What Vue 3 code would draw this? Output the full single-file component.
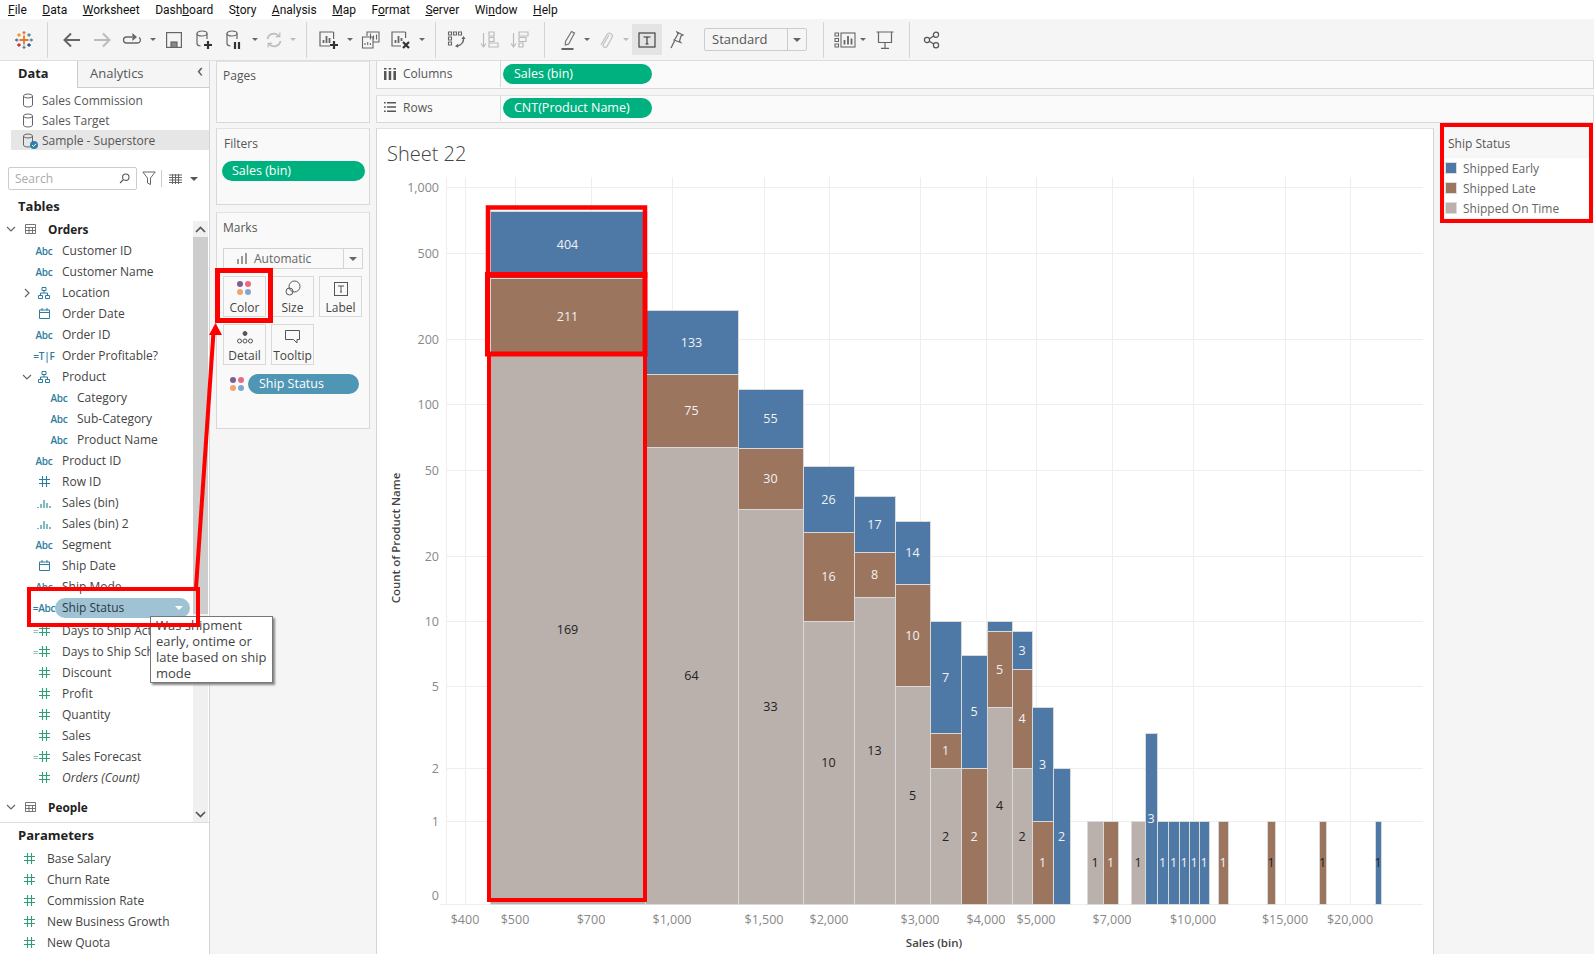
<script setup>
const BLUE = "#4e79a7";
const BROWN = "#9c755f";
const GREY = "#bab0ac";
const COLORS = { b: BLUE, r: BROWN, g: GREY };

const menus = [
  ["", "F", "ile"],
  ["", "D", "ata"],
  ["", "W", "orksheet"],
  ["Dash", "b", "oard"],
  ["S", "t", "ory"],
  ["", "A", "nalysis"],
  ["", "M", "ap"],
  ["F", "o", "rmat"],
  ["", "S", "erver"],
  ["Wi", "n", "dow"],
  ["", "H", "elp"],
];

const sources = [
  { name: "Sales Commission" },
  { name: "Sales Target" },
  { name: "Sample - Superstore", active: true },
];

const fields = [
  { name: "Customer ID", icon: "abc" },
  { name: "Customer Name", icon: "abc" },
  { name: "Location", icon: "hier", chevron: "right" },
  { name: "Order Date", icon: "cal" },
  { name: "Order ID", icon: "abc" },
  { name: "Order Profitable?", icon: "tf" },
  { name: "Product", icon: "hier", chevron: "down" },
  { name: "Category", icon: "abc", nested: true },
  { name: "Sub-Category", icon: "abc", nested: true },
  { name: "Product Name", icon: "abc", nested: true },
  { name: "Product ID", icon: "abc" },
  { name: "Row ID", icon: "hashDim" },
  { name: "Sales (bin)", icon: "bin" },
  { name: "Sales (bin) 2", icon: "bin" },
  { name: "Segment", icon: "abc" },
  { name: "Ship Date", icon: "cal" },
  { name: "Ship Mode", icon: "abc" },
  { name: "Ship Status", icon: "calcAbc", hover: true },
  { name: "Days to Ship Actual", icon: "calcHash" },
  { name: "Days to Ship Scheduled", icon: "calcHash" },
  { name: "Discount", icon: "hash" },
  { name: "Profit", icon: "hash" },
  { name: "Quantity", icon: "hash" },
  { name: "Sales", icon: "hash" },
  { name: "Sales Forecast", icon: "calcHash" },
  { name: "Orders (Count)", icon: "hash", italic: true },
];

const params = ["Base Salary", "Churn Rate", "Commission Rate", "New Business Growth", "New Quota"];

const legend = [
  { name: "Shipped Early", color: BLUE },
  { name: "Shipped Late", color: BROWN },
  { name: "Shipped On Time", color: GREY },
];

const yTicks = [
  ["1,000", 187], ["500", 253], ["200", 339], ["100", 404], ["50", 470], ["20", 556],
  ["10", 621], ["5", 686], ["2", 768], ["1", 821],
];

const xTicks = [
  ["$400", 465], ["$500", 515], ["$700", 591], ["$1,000", 672], ["$1,500", 764], ["$2,000", 829],
  ["$3,000", 920], ["$4,000", 986], ["$5,000", 1036], ["$7,000", 1112], ["$10,000", 1193],
  ["$15,000", 1285], ["$20,000", 1350],
];

// x0, x1, then [top, bottom, colour, label, dark label on a narrow bar]
const bars = [
  [490, 645, [[211, 278, "b", "404"], [278, 354, "r", "211"], [354, 904, "g", "169"]]],
  [645, 738, [[310, 374, "b", "133"], [374, 447, "r", "75"], [447, 904, "g", "64"]]],
  [738, 803, [[389, 448, "b", "55"], [448, 509, "r", "30"], [509, 904, "g", "33"]]],
  [803, 854, [[466, 532, "b", "26"], [532, 621, "r", "16"], [621, 904, "g", "10"]]],
  [854, 895, [[496, 552, "b", "17"], [552, 597, "r", "8"], [597, 904, "g", "13"]]],
  [895, 930, [[521, 584, "b", "14"], [584, 686, "r", "10"], [686, 904, "g", "5"]]],
  [930, 961, [[621, 733, "b", "7"], [733, 768, "r", "1"], [768, 904, "g", "2"]]],
  [961, 987, [[655, 768, "b", "5"], [768, 904, "r", "2"]]],
  [987, 1012, [[621, 631, "b", ""], [631, 707, "r", "5"], [707, 904, "g", "4"]]],
  [1012, 1032, [[631, 669, "b", "3"], [669, 768, "r", "4"], [768, 904, "g", "2"]]],
  [1032, 1053, [[707, 821, "b", "3"], [821, 904, "r", "1"]]],
  [1053, 1070, [[768, 904, "b", "2"]]],
  [1087, 1103, [[821, 904, "g", "1"]]],
  [1103, 1118, [[821, 904, "r", "1"]]],
  [1131, 1145, [[821, 904, "g", "1"]]],
  [1145, 1157, [[733, 904, "b", "3"]]],
  [1157, 1168, [[821, 904, "b", "1"]]],
  [1168, 1179, [[821, 904, "b", "1"]]],
  [1179, 1189, [[821, 904, "b", "1"]]],
  [1189, 1199, [[821, 904, "b", "1"]]],
  [1199, 1209, [[821, 904, "b", "1"]]],
  [1218, 1228, [[821, 904, "r", "1"]]],
  [1267, 1275, [[821, 904, "r", "1", true]]],
  [1319, 1326, [[821, 904, "r", "1", true]]],
  [1375, 1381, [[821, 904, "b", "1", true]]],
];

const segments = bars.flatMap(([x0, x1, segs]) =>
  segs.map(([top, bottom, color, label, dark]) => ({
    x: x0,
    y: top,
    w: x1 - x0,
    h: bottom - top,
    fill: COLORS[color],
    label,
    tx: (x0 + x1) / 2,
    ty: (top + bottom) / 2,
    dark: dark || color === "g",
  })),
);
</script>

<template>
  <div class="app">
    <nav class="menu">
      <span v-for="m in menus" :key="m[1] + m[2]" class="menu-item">{{ m[0] }}<u>{{ m[1] }}</u>{{ m[2] }}</span>
    </nav>

    <div class="toolbar">
      <div class="tb-logo">
        <svg width="20" height="20" viewBox="0 0 20 20" fill="none" stroke-width="1.3">
          <path d="M10 5.5v9M5.5 10h9" stroke="#e8762d" stroke-width="1.8" />
          <path d="M10 1v3.4M8.4 2.7h3.2" stroke="#e8762d" />
          <path d="M10 15.6V19M8.4 17.3h3.2" stroke="#5b879b" />
          <path d="M1 10h3.4M2.7 8.4v3.2" stroke="#5b6f9b" />
          <path d="M15.6 10H19M17.3 8.4v3.2" stroke="#5b879b" />
          <path d="M5 3.2v3.6M3.2 5h3.6" stroke="#eb9129" />
          <path d="M15 3.2v3.6M13.2 5h3.6" stroke="#59879b" />
          <path d="M5 13.2v3.6M3.2 15h3.6" stroke="#c72035" />
          <path d="M15 13.2v3.6M13.2 15h3.6" stroke="#1f447e" />
        </svg>
      </div>
      <i class="tb-sep" />
      <div class="tb-btn first">
        <svg width="20" height="20" viewBox="0 0 20 20" fill="none" stroke="#666" stroke-width="2"><path d="M18 10H3M9 3.5 2.5 10 9 16.5" /></svg>
      </div>
      <div class="tb-btn">
        <svg width="20" height="20" viewBox="0 0 20 20" fill="none" stroke="#bbb" stroke-width="2"><path d="M2 10h15M11 3.5l6.5 6.5-6.5 6.5" /></svg>
      </div>
      <div class="tb-btn">
        <svg width="20" height="20" viewBox="0 0 20 20" fill="none" stroke="#666" stroke-width="1.3"><path d="M10 7H4.5a3 3 0 0 0 0 6h11a3 3 0 0 0 1.6-5.5" /><path d="M11 4.4 14 7l-3 2.6z" fill="#666" /></svg>
      </div>
      <i class="tb-caret" />
      <div class="tb-btn">
        <svg width="18" height="18" viewBox="0 0 18 18" fill="none" stroke="#666" stroke-width="1.2"><rect x="1.6" y="1.6" width="14.8" height="14.8" /><rect x="6" y="11" width="6" height="5.4" fill="#888" stroke="#666" /></svg>
      </div>
      <div class="tb-btn">
        <svg width="20" height="22" viewBox="0 0 20 22" fill="none" stroke="#666" stroke-width="1.2"><ellipse cx="8" cy="4.5" rx="5" ry="2.5" /><path d="M3 4.5v10c0 1.4 1.3 2.3 3.5 2.5M13 4.5V10" /><path d="M14 12v8M10 16h8" stroke="#333" stroke-width="2.2" /></svg>
      </div>
      <div class="tb-btn">
        <svg width="20" height="22" viewBox="0 0 20 22" fill="none" stroke="#666" stroke-width="1.2"><ellipse cx="8" cy="4.5" rx="5" ry="2.5" /><path d="M3 4.5v10c0 1.4 1.3 2.3 3.5 2.5M13 4.5V10" /><path d="M11 13v7M15 13v7" stroke="#333" stroke-width="2.2" /></svg>
      </div>
      <i class="tb-caret" />
      <div class="tb-btn narrow">
        <svg width="18" height="18" viewBox="0 0 18 18" fill="none" stroke="#bbb" stroke-width="1.6"><path d="M2.5 8a6.6 6.6 0 0 1 11.5-3M15.5 10a6.6 6.6 0 0 1-11.5 3" /><path d="M14.8 1.6v4h-4M3.2 16.4v-4h4" stroke-width="1.2" /></svg>
      </div>
      <i class="tb-caret off" />
      <i class="tb-sep s2" />
      <div class="tb-btn">
        <svg width="22" height="22" viewBox="0 0 22 22" fill="none" stroke="#666" stroke-width="1.2"><path d="M15.6 3H2v14h10" /><path d="M15.6 3v7" /><path d="M5.5 14v-3M8.5 14V7M11.5 14v-5" stroke-width="1.8" /><path d="M16 12v8M12 16h8" stroke="#333" stroke-width="2.2" /></svg>
      </div>
      <i class="tb-caret" />
      <div class="tb-btn">
        <svg width="20" height="20" viewBox="0 0 20 20" fill="none" stroke="#666" stroke-width="1.1"><path d="M6 6V2h12v10h-6" /><path d="M1.5 7H12v11H1.5z" /><path d="M9.5 9.5v-6M12.5 9.5v-4M15.5 9.5v-5M4 15v-2M6.7 15v-3M9.4 15v-2" /></svg>
      </div>
      <div class="tb-btn">
        <svg width="22" height="22" viewBox="0 0 22 22" fill="none" stroke="#666" stroke-width="1.2"><path d="M15.6 3H2v14h9" /><path d="M15.6 3v6" /><path d="M5.5 14v-3M8.5 14V7M11.5 12V9" stroke-width="1.8" /><path d="m13 13 6 6M19 13l-6 6" stroke="#333" stroke-width="2.2" /></svg>
      </div>
      <i class="tb-caret" />
      <i class="tb-sep s3" />
      <div class="tb-btn">
        <svg width="20" height="20" viewBox="0 0 20 20" fill="none" stroke="#666" stroke-width="1.1"><path d="M1.5 2h3v3h-3zM6.5 2h3v3h-3zM11.5 2h3v3h-3zM1.5 7h3v3h-3zM1.5 12h3v3h-3z" /><path d="M16.5 7.5c.4 4-2 7.4-6 8.5" stroke-width="1.3" /><path d="m14.4 9 2.1-3 2 3zM11 13.8 8 16.2l3.2 1.6z" fill="#666" stroke="none" /></svg>
      </div>
      <div class="tb-btn spaced-3">
        <svg width="20" height="20" viewBox="0 0 20 20" fill="none" stroke="#bbb" stroke-width="1.2"><path d="M3.5 3v13M1 13.5 3.5 17 6 13.5" /><path d="M9 2h5v4H9zM9 7.5h5v4H9zM9 13h9v4H9z" /></svg>
      </div>
      <div class="tb-btn">
        <svg width="20" height="20" viewBox="0 0 20 20" fill="none" stroke="#bbb" stroke-width="1.2"><path d="M3.5 3v13M1 13.5 3.5 17 6 13.5" /><path d="M9 2h9v4H9zM9 7.5h7v4H9zM9 13h4v4H9z" /></svg>
      </div>
      <i class="tb-sep s4" />
      <div class="tb-btn">
        <svg width="20" height="22" viewBox="0 0 20 22" fill="none" stroke="#777" stroke-width="1.2"><path d="M12.5 2.5l3 1.6-5.8 11-3.4.8.2-3.4z" /><path d="M2.5 20h12" stroke="#555" stroke-width="1.8" /></svg>
      </div>
      <i class="tb-caret tight" />
      <div class="tb-btn">
        <svg width="18" height="22" viewBox="0 0 18 22" fill="none" stroke="#c4c4c4" stroke-width="1.3"><path d="M13 6l-5.6 9.5c-1.4 2.3 2.2 4.2 3.6 1.9L16 8.5c1.8-3.2-3-6-5-2.8L5 15.8" /></svg>
      </div>
      <i class="tb-caret off" />
      <div class="tb-btn tb-active">
        <svg width="18" height="18" viewBox="0 0 18 18" fill="none" stroke="#333" stroke-width="1.1"><rect x="1" y="2" width="16" height="14" /><path d="M5.5 6h7M9 6v7M7.5 13h3" /></svg>
      </div>
      <div class="tb-btn">
        <svg width="18" height="20" viewBox="0 0 18 20" fill="none" stroke="#666" stroke-width="1.2"><path d="M9 2l6 3-2 1-1.500 5 1.200 1.500-6.700-2.500 1.200-1.200L10 4z" /><path d="M6.500 11 3 18" /></svg>
      </div>
      <div class="fit-select">
        <span class="fit-label">Standard</span>
        <span class="fit-arrow"><i class="tb-caret-glyph" /></span>
      </div>
      <i class="tb-sep s5" />
      <div class="tb-btn">
        <svg width="22" height="18" viewBox="0 0 22 18" fill="none" stroke="#666" stroke-width="1.1"><path d="M1 2h3.500v3H1zM1 7.500h3.500v3H1zM1 13h3.500v3H1z" /><rect x="7" y="2" width="14" height="14" /><path d="M10.500 13.500V9M14 13.500V5M17.500 13.500V7.500" stroke-width="1.8" /></svg>
      </div>
      <i class="tb-caret tight" />
      <div class="tb-btn spaced-4">
        <svg width="20" height="20" viewBox="0 0 20 20" fill="none" stroke="#666" stroke-width="1.2"><path d="M1.500 2h17M3.500 2.500v10h13v-10M10 13v5M6 18.300h8" /></svg>
      </div>
      <i class="tb-sep s6" />
      <div class="tb-btn">
        <svg width="18" height="18" viewBox="0 0 18 18" fill="none" stroke="#555" stroke-width="1.2"><circle cx="13" cy="3.800" r="2.600" /><circle cx="13" cy="14.200" r="2.600" /><circle cx="4" cy="9" r="2.600" /><path d="M6.300 7.700l4.500-2.600M6.300 10.300l4.500 2.600" /></svg>
      </div>
    </div>

    <div class="body">
      <aside class="left">
        <div class="tabs">
          <div class="tab active">Data</div>
          <div class="tab">Analytics<span class="collapse">‹</span></div>
        </div>

        <div class="sources">
          <div v-for="s in sources" :key="s.name" class="source" :class="{ active: s.active }">
            <svg width="12" height="15" viewBox="0 0 12 15" fill="none" stroke="#666" stroke-width="1"><ellipse cx="6" cy="3" rx="4.500" ry="2" /><path d="M1.500 3v9c0 1.100 2 2 4.500 2s4.500-.9 4.500-2V3" /></svg>
            <svg v-if="s.active" class="source-badge" width="8" height="8" viewBox="0 0 8 8"><circle cx="4" cy="4" r="4" fill="#2a7fab" /><path d="M2 4l1.500 1.500L6 2.800" stroke="#fff" fill="none" /></svg>
            <span>{{ s.name }}</span>
          </div>
        </div>

        <div class="search-row">
          <div class="search">
            <span>Search</span>
            <svg width="11" height="11" viewBox="0 0 11 11" fill="none" stroke="#555" stroke-width="1.100"><circle cx="6.800" cy="4.200" r="3.200" /><path d="M4.500 6.500 1 10" /></svg>
          </div>
          <svg class="funnel" width="14" height="15" viewBox="0 0 14 15" fill="none" stroke="#666" stroke-width="1"><path d="M.8 1h12.400L8.500 7v6.500L5.500 12V7z" /></svg>
          <i class="search-sep" />
          <svg width="13" height="10" viewBox="0 0 13 10" fill="none" stroke="#666" stroke-width="1"><path d="M0 1h13M0 3.500h13M0 6h13M0 8.500h13M3.500 0v10M6.500 0v10M9.500 0v10" /></svg>
          <i class="tb-caret-glyph search-caret" />
        </div>

        <div class="section-title">Tables</div>

        <div class="list-wrap">
          <div class="list">
            <div class="field table-row">
              <svg class="chev" width="10" height="6" viewBox="0 0 10 6" fill="none" stroke="#666" stroke-width="1.200"><path d="M1 1l4 4 4-4" /></svg>
              <span class="f-icon"><svg width="11" height="10" viewBox="0 0 11 10" fill="none" stroke="#666" stroke-width=".9"><path d="M.5.500h10v9H.500zM.5 3.500h10M.5 6.500h10M4 3.500v6M7.500 3.500v6" /></svg></span>
              <b>Orders</b>
            </div>
            <div v-for="f in fields" :key="f.name" class="field" :class="{ nested: f.nested, hover: f.hover }">
              <span class="chev-slot">
                <svg v-if="f.chevron === 'right'" width="6" height="10" viewBox="0 0 6 10" fill="none" stroke="#666" stroke-width="1.200"><path d="M1 1l4 4-4 4" /></svg>
                <svg v-if="f.chevron === 'down'" width="10" height="6" viewBox="0 0 10 6" fill="none" stroke="#666" stroke-width="1.200"><path d="M1 1l4 4 4-4" /></svg>
              </span>
              <span class="f-icon">
                <span v-if="f.icon === 'abc'" class="abc">Abc</span>
                <span v-else-if="f.icon === 'calcAbc'" class="abc">=Abc</span>
                <span v-else-if="f.icon === 'tf'" class="abc">=T|F</span>
                <svg v-else-if="f.icon === 'hier'" width="12" height="12" viewBox="0 0 12 12" fill="none" stroke="#2e7d9e" stroke-width="1"><path d="M4 .5h4v3H4zM.5 8.500h4v3h-4zM7.500 8.500h4v3h-4zM6 3.500V6M2.500 8.500V6h7v2.500" /></svg>
                <svg v-else-if="f.icon === 'cal'" width="11" height="11" viewBox="0 0 11 11" fill="none" stroke="#2e7d9e" stroke-width="1"><path d="M.5 2h10v8.500H.500zM.5 4.500h10M3 0v2.500M8 0v2.500" /></svg>
                <svg v-else-if="f.icon === 'bin'" width="15" height="10" viewBox="0 0 15 10"><path d="M1 9v1M4 6v4M7 2v8M10 5v5M13 8v2" stroke="#2e8f96" stroke-width="1.200" /></svg>
                <span v-else class="hash-wrap">
                  <span v-if="f.icon === 'calcHash'" class="eq">=</span>
                  <svg width="11" height="11" viewBox="0 0 11 11" fill="none" :stroke="f.icon === 'hashDim' ? '#2e7d9e' : '#2f9d7a'" stroke-width="1.100"><path d="M3.500 0v11M7.500 0v11M0 3.500h11M0 7.500h11" /></svg>
                </span>
              </span>
              <span class="f-name" :class="{ italic: f.italic }">{{ f.name }}</span>
              <i v-if="f.hover" class="hover-caret" />
            </div>
            <div class="field table-row people">
              <svg class="chev" width="10" height="6" viewBox="0 0 10 6" fill="none" stroke="#666" stroke-width="1.200"><path d="M1 1l4 4 4-4" /></svg>
              <span class="f-icon"><svg width="11" height="10" viewBox="0 0 11 10" fill="none" stroke="#666" stroke-width=".9"><path d="M.5.500h10v9H.500zM.5 3.500h10M.5 6.500h10M4 3.500v6M7.500 3.500v6" /></svg></span>
              <b>People</b>
            </div>
          </div>
          <div class="scrollbar">
            <svg width="11" height="7" viewBox="0 0 11 7" fill="none" stroke="#555" stroke-width="1.700"><path d="M1 6l4.500-4.500L10 6" /></svg>
            <div class="thumb" />
            <svg class="down" width="11" height="7" viewBox="0 0 11 7" fill="none" stroke="#555" stroke-width="1.700"><path d="M1 1l4.500 4.500L10 1" /></svg>
          </div>
        </div>

        <div class="params">
          <div class="section-title param-title">Parameters</div>
          <div v-for="p in params" :key="p" class="field param">
            <span class="chev-slot" />
            <span class="f-icon">
              <svg width="11" height="11" viewBox="0 0 11 11" fill="none" stroke="#2f9d7a" stroke-width="1.100"><path d="M3.500 0v11M7.500 0v11M0 3.500h11M0 7.500h11" /></svg>
            </span>
            <span class="f-name">{{ p }}</span>
          </div>
        </div>
      </aside>

      <section class="cards">
        <div class="card pages"><div class="card-title">Pages</div></div>
        <div class="card filters">
          <div class="card-title">Filters</div>
          <div class="pill green filter-pill">Sales (bin)</div>
        </div>
        <div class="card marks">
          <div class="card-title">Marks</div>
          <div class="mark-select">
            <svg width="12" height="11" viewBox="0 0 12 11" fill="#999"><path d="M1 6h2v5H1zM5 3h2v8H5zM9 0h2v11H9z" /></svg>
            <span class="mark-select-label">Automatic</span>
            <span class="mark-select-arrow"><i class="tb-caret-glyph" /></span>
          </div>
          <div class="mark-grid">
            <div class="mark-btn">
              <span class="dots"><i class="d1" /><i class="d2" /><i class="d3" /><i class="d4" /></span>
              <span>Color</span>
            </div>
            <div class="mark-btn">
              <svg width="16" height="16" viewBox="0 0 16 16" fill="none" stroke="#555" stroke-width="1"><circle cx="9.500" cy="6.500" r="5.500" /><circle cx="4.500" cy="11.500" r="3.500" /></svg>
              <span>Size</span>
            </div>
            <div class="mark-btn">
              <svg width="14" height="14" viewBox="0 0 14 14" fill="none" stroke="#555" stroke-width="1"><rect x=".5" y=".5" width="13" height="13" /><path d="M4 4h6M7 4v6M6 10h2" /></svg>
              <span>Label</span>
            </div>
            <div class="mark-btn">
              <svg width="16" height="13" viewBox="0 0 16 13" fill="none" stroke="#555" stroke-width="1"><circle cx="8" cy="2.500" r="2" fill="#555" /><circle cx="2.500" cy="10" r="2" /><circle cx="8" cy="10" r="2" /><circle cx="13.500" cy="10" r="2" /></svg>
              <span>Detail</span>
            </div>
            <div class="mark-btn">
              <svg width="15" height="14" viewBox="0 0 15 14" fill="none" stroke="#555" stroke-width="1"><path d="M.5.500h14v9H12V13L8.500 9.500H.5z" /></svg>
              <span>Tooltip</span>
            </div>
          </div>
          <div class="mark-field">
            <span class="dots"><i class="d1" /><i class="d2" /><i class="d3" /><i class="d4" /></span>
            <div class="pill teal">Ship Status</div>
          </div>
        </div>
      </section>

      <section class="work">
        <div class="shelf columns">
          <div class="shelf-label">
            <svg width="12" height="12" viewBox="0 0 12 12" fill="#555"><path d="M0 3h2.500v9H0zM4.700 3h2.500v9H4.700zM9.400 3H12v9H9.400zM0 0h2.500v1.500H0zM4.700 0h2.500v1.500H4.700zM9.400 0H12v1.500H9.400z" /></svg>
            <span>Columns</span>
          </div>
          <div class="pill green shelf-pill">Sales (bin)</div>
        </div>
        <div class="shelf rows">
          <div class="shelf-label">
            <svg width="12" height="12" viewBox="0 0 12 12" fill="#555"><path d="M3 1h9v1.500H3zM3 5.300h9v1.500H3zM3 9.600h9v1.500H3zM0 1h1.700v1.500H0zM0 5.300h1.700v1.500H0zM0 9.600h1.700v1.500H0z" /></svg>
            <span>Rows</span>
          </div>
          <div class="pill green shelf-pill">CNT(Product Name)</div>
        </div>

        <div class="view">
          <div class="sheet">
            <h1 class="sheet-title">Sheet 22</h1>
            <svg class="chart" width="1056" height="782" viewBox="377 172 1056 782">
              <line v-for="t in yTicks" :key="t[0]" x1="446" x2="1423" :y1="t[1]" :y2="t[1]" class="grid" />
              <line x1="446" x2="446" y1="177" y2="904" class="grid" />
              <line v-for="t in xTicks" :key="t[0]" :x1="t[1]" :x2="t[1]" y1="177" y2="904" class="grid" />
              <line x1="440" x2="1423" y1="904" y2="904" class="grid" />

              <g v-for="(s, i) in segments" :key="i">
                <rect :x="s.x + 0.5" :y="s.y + 0.5" :width="s.w" :height="s.h" :fill="s.fill" stroke="#d9d9d9" stroke-width="1" />
              </g>
              <text v-for="(s, i) in segments" :key="'l' + i" :x="s.tx" :y="s.ty + 4.500" class="seg-label" :class="{ dark: s.dark }">{{ s.label }}</text>

              <text v-for="t in yTicks" :key="'y' + t[0]" x="439" :y="t[1] + 5" class="tick end">{{ t[0] }}</text>
              <text x="439" y="900" class="tick end">0</text>
              <text v-for="t in xTicks" :key="'x' + t[0]" :x="t[1]" y="924" class="tick mid">{{ t[0] }}</text>

              <text x="0" y="0" transform="translate(400 538) rotate(-90)" class="axis-title">Count of Product Name</text>
              <text x="934" y="947" class="axis-title">Sales (bin)</text>
            </svg>
          </div>
          <aside class="legend">
            <div class="legend-title">Ship Status</div>
            <div v-for="l in legend" :key="l.name" class="legend-item">
              <i class="swatch" :style="{ background: l.color }" />
              <span>{{ l.name }}</span>
            </div>
          </aside>
        </div>
      </section>
    </div>

    <div class="tooltip">Was shipment early, ontime or late based on ship mode</div>

    <svg class="annotations" width="1594" height="954" viewBox="0 0 1594 954" fill="none" stroke="#ff0000">
      <rect x="488" y="207.500" width="157" height="68" stroke-width="4.500" />
      <rect x="487.500" y="274.500" width="157.500" height="79.500" stroke-width="5" />
      <rect x="489" y="354" width="156" height="546" stroke-width="4" />
      <rect x="217.500" y="270.500" width="53" height="50" stroke-width="5" />
      <rect x="29" y="589" width="169" height="36" stroke-width="4" />
      <rect x="1442" y="125" width="149" height="96" stroke-width="4" />
      <line x1="196" y1="588" x2="213.500" y2="332" stroke-width="4" />
      <polygon points="215.500,323 209,335 222,335" fill="#ff0000" stroke="none" />
    </svg>
  </div>
</template>

<style>
html,
body {
  margin: 0;
  background: #fff;
}
</style>

<style scoped>
.app {
  position: relative;
  width: 1594px;
  height: 954px;
  overflow: hidden;
  display: flex;
  flex-direction: column;
  background: #f5f5f5;
  color: #444;
  font-family: "Open Sans", "Liberation Sans", sans-serif;
  font-size: 12px;
}

.menu {
  height: 19px;
  flex: none;
  display: flex;
  align-items: center;
  gap: 15.500px;
  padding-left: 8px;
  background: #fff;
  color: #111;
  font-family: Roboto, "Liberation Sans", sans-serif;
  font-size: 12px;
}

.toolbar {
  height: 42px;
  flex: none;
  display: flex;
  align-items: center;
  box-sizing: border-box;
  border-bottom: 1px solid #ddd;
  background: #f5f5f5;
}

.tb-logo {
  width: 47px;
  display: flex;
  justify-content: center;
}

.tb-sep {
  width: 1px;
  height: 36px;
  flex: none;
  background: #d4d4d4;
}

.tb-sep.s2 {
  margin-left: 7px;
  margin-right: 7px;
}

.tb-sep.s3 {
  margin-left: 7px;
  margin-right: 6px;
}

.tb-sep.s4 {
  margin-left: 9px;
  margin-right: 9px;
}

.tb-sep.s5 {
  margin-left: 16px;
  margin-right: 6px;
}

.tb-sep.s6 {
  margin-left: 9px;
  margin-right: 7px;
}

.tb-btn {
  width: 30px;
  height: 31px;
  flex: none;
  display: flex;
  align-items: center;
  justify-content: center;
}

.tb-btn.first {
  margin-left: 8px;
  width: 31px;
}

.tb-btn.narrow {
  width: 26px;
}

.tb-btn.spaced-3 {
  margin-left: 3px;
}

.tb-btn.spaced-4 {
  margin-left: 4px;
}

.tb-active {
  background: #e4e4e4;
}

.tb-caret {
  width: 12px;
  height: 31px;
  flex: none;
  position: relative;
}

.tb-caret.tight {
  margin-left: -3px;
  margin-right: -3px;
}

.tb-caret::after,
.tb-caret-glyph {
  content: "";
  display: block;
  width: 0;
  height: 0;
  border-left: 3px solid transparent;
  border-right: 3px solid transparent;
  border-top: 3px solid #666;
}

.tb-caret::after {
  position: absolute;
  left: 3px;
  top: 14px;
}

.tb-caret.off::after {
  border-top-color: #bbb;
}

.fit-select {
  width: 103px;
  height: 23px;
  margin-left: 12px;
  flex: none;
  display: flex;
  box-sizing: border-box;
  border: 1px solid #ccc;
  border-radius: 2px;
  font-size: 13px;
  color: #555;
}

.fit-label {
  flex: 1;
  padding-left: 7px;
  line-height: 20px;
}

.fit-arrow {
  width: 18px;
  display: flex;
  align-items: center;
  justify-content: center;
  border-left: 1px solid #ccc;
}

.fit-arrow .tb-caret-glyph,
.mark-select-arrow .tb-caret-glyph,
.search-caret {
  border-left-width: 4px;
  border-right-width: 4px;
  border-top-width: 4px;
}

.body {
  flex: 1;
  min-height: 0;
  display: flex;
}

.left {
  width: 210px;
  flex: none;
  box-sizing: border-box;
  display: flex;
  flex-direction: column;
  border-right: 1px solid #d4d4d4;
  background: #fff;
}

.tabs {
  height: 27px;
  flex: none;
  display: flex;
}

.tab {
  box-sizing: border-box;
  position: relative;
  line-height: 24px;
  font-size: 13px;
  color: #555;
}

.tab.active {
  width: 77px;
  padding-left: 18px;
  font-weight: 700;
  color: #222;
  font-size: 12.800px;
}

.tab:not(.active) {
  flex: 1;
  padding-left: 12px;
  background: #f5f5f5;
  border-left: 1px solid #ccc;
  border-bottom: 1px solid #ccc;
}

.collapse {
  position: absolute;
  right: 6px;
  top: -3px;
  font-size: 20px;
  color: #555;
}

.sources {
  padding-top: 2px;
  height: 62px;
  flex: none;
}

.source {
  height: 20px;
  display: flex;
  align-items: center;
  position: relative;
  padding-left: 22px;
  margin-left: 0;
  color: #555;
}

.source span {
  margin-left: 8px;
}

.source.active {
  margin-left: 11px;
  width: 187px;
  padding-left: 11px;
  background: #e6e6e6;
}

.source-badge {
  position: absolute;
  left: 19px;
  top: 11px;
}

.search-row {
  margin-top: 15px;
  height: 23px;
  flex: none;
  display: flex;
  align-items: center;
  padding-left: 8px;
}

.search {
  width: 129px;
  height: 23px;
  box-sizing: border-box;
  display: flex;
  align-items: center;
  justify-content: space-between;
  padding: 0 6px;
  border: 1px solid #ccc;
  border-radius: 2px;
  color: #aaa;
  font-size: 12px;
}

.funnel {
  margin-left: 5px;
}

.search-sep {
  width: 1px;
  height: 17px;
  margin: 0 7px 0 5px;
  background: #ccc;
}

.search-caret {
  margin-left: 8px;
  border-top-color: #555;
}

.section-title {
  height: 20px;
  flex: none;
  margin-top: 6px;
  padding-left: 18px;
  line-height: 20px;
  font-size: 13px;
  font-weight: 700;
  color: #222;
}

.list-wrap {
  flex: 1;
  min-height: 0;
  margin-top: 2px;
  display: flex;
  overflow: hidden;
  border-bottom: 1px solid #ddd;
  position: relative;
}

.list {
  flex: 1;
  min-width: 0;
  overflow: hidden;
}

.scrollbar {
  width: 15px;
  flex: none;
  margin: 3px 1px 0 0;
  position: relative;
  background: #f0f0f0;
  display: flex;
  flex-direction: column;
  align-items: center;
}

.scrollbar svg {
  margin-top: 5px;
  flex: none;
}

.thumb {
  margin-top: 4px;
  width: 15px;
  height: 377px;
  background: #cdcdcd;
}

.scrollbar .down {
  position: absolute;
  bottom: 4px;
  margin: 0;
}

.field {
  height: 21px;
  display: flex;
  align-items: center;
  padding-left: 19px;
  white-space: nowrap;
  color: #444;
  font-size: 12px;
}

.field.nested {
  padding-left: 34px;
}

.field.table-row {
  height: 22px;
  padding-left: 6px;
}

.field.table-row .chev {
  width: 10px;
  margin-right: 5px;
  flex: none;
}

.field.table-row b {
  margin-left: 9px;
  color: #222;
  font-size: 11.800px;
}

.field.people {
  margin-top: 8px;
  height: 21px;
}

.chev-slot {
  width: 16px;
  flex: none;
  display: flex;
  align-items: center;
  justify-content: center;
}

.f-icon {
  width: 18px;
  flex: none;
  display: flex;
  align-items: center;
  justify-content: center;
}

.f-name {
  margin-left: 9px;
}

.f-name.italic {
  font-style: italic;
}

.abc {
  font-size: 10px;
  font-weight: 600;
  letter-spacing: -0.200px;
  color: #2e7d9e;
}

.hash-wrap {
  display: flex;
  align-items: center;
  position: relative;
}

.eq {
  position: absolute;
  right: 100%;
  font-size: 10px;
  color: #2f9d7a;
}

.field.hover {
  height: 23px;
  box-sizing: border-box;
  padding-bottom: 2px;
  position: relative;
}

.field.hover::before {
  content: "";
  position: absolute;
  left: 55px;
  width: 135px;
  height: 20px;
  border-radius: 10px;
  background: #9fc3d4;
}

.field.hover .f-icon,
.field.hover .f-name {
  position: relative;
}

.field.hover .f-name {
  color: #2b3a42;
}

.hover-caret {
  position: absolute;
  left: 175px;
  top: 9px;
  border-left: 4px solid transparent;
  border-right: 4px solid transparent;
  border-top: 4px solid #fff;
}

.params {
  flex: none;
  height: 131px;
  overflow: hidden;
}

.param-title {
  margin-top: 2px;
  margin-bottom: 3px;
}

.field.param {
  padding-left: 4px;
}

.cards {
  width: 154px;
  flex: none;
  margin-left: 6px;
  display: flex;
  flex-direction: column;
}

.card {
  box-sizing: border-box;
  border: 1px solid #d8d8d8;
  border-top-color: #e2e2e2;
  background: #f9f9f9;
  padding: 0 6px;
}

.card-title {
  height: 30px;
  line-height: 30px;
  color: #555;
  font-size: 12px;
}

.pages {
  height: 62px;
}

.pages .card-title {
  line-height: 28px;
}

.filters {
  height: 77px;
  margin-top: 5px;
  padding-left: 5px;
  padding-right: 4px;
}

.filters .card-title {
  padding-left: 2px;
}

.pill {
  height: 20px;
  border-radius: 10px;
  line-height: 19px;
  color: #fff;
  font-size: 12.500px;
}

.pill.green {
  background: #00b180;
}

.pill.teal {
  flex: 1;
  background: #4f96b4;
  padding-left: 11px;
}

.filter-pill {
  margin-top: 2px;
  padding-left: 10px;
}

.marks {
  height: 217px;
  margin-top: 7px;
}

.marks .card-title {
  height: 35px;
  line-height: 30px;
}

.mark-select {
  height: 21px;
  display: flex;
  align-items: center;
  box-sizing: border-box;
  border: 1px solid #d4d4d4;
  padding-left: 12px;
  color: #666;
}

.mark-select-label {
  flex: 1;
  margin-left: 6px;
}

.mark-select-arrow {
  width: 18px;
  height: 100%;
  display: flex;
  align-items: center;
  justify-content: center;
  border-left: 1px solid #d4d4d4;
}

.mark-grid {
  margin-top: 7px;
  display: grid;
  grid-template-columns: 43px 43px 43px;
  grid-auto-rows: 41px;
  column-gap: 5px;
  row-gap: 7px;
}

.mark-btn {
  box-sizing: border-box;
  border: 1px solid #d8d8d8;
  display: flex;
  flex-direction: column;
  align-items: center;
  justify-content: flex-end;
  gap: 3px;
  color: #444;
}

.dots {
  width: 15px;
  height: 15px;
  display: grid;
  grid-template-columns: 6px 6px;
  grid-auto-rows: 6px;
  gap: 2px;
}

.dots i {
  border-radius: 50%;
}

.d1 {
  background: #7c5f91;
}

.d2 {
  background: #ea6b81;
}

.d3 {
  background: #f0a56e;
}

.d4 {
  background: #7ea7d0;
}

.mark-field {
  margin-top: 9px;
  display: flex;
  align-items: center;
  gap: 3px;
  padding-left: 7px;
  padding-right: 4px;
}

.work {
  flex: 1;
  min-width: 0;
  margin-left: 6px;
  display: flex;
  flex-direction: column;
}

.shelf {
  height: 28px;
  flex: none;
  display: flex;
  align-items: center;
  box-sizing: border-box;
  padding-bottom: 2px;
  border: 1px solid #d8d8d8;
  border-top: 0;
  background: #fafafa;
}

.shelf.rows {
  height: 28px;
  margin-top: 6px;
  border-top: 1px solid #e2e2e2;
}

.shelf-label {
  width: 124px;
  height: calc(100% + 2px);
  flex: none;
  box-sizing: border-box;
  display: flex;
  align-items: center;
  gap: 7px;
  padding-left: 7px;
  padding-bottom: 2px;
  border-right: 1px solid #d8d8d8;
  color: #555;
  font-size: 12px;
}

.shelf.columns .shelf-label {
  padding-bottom: 0;
}

.shelf-pill {
  width: 149px;
  margin-left: 2px;
  padding-left: 11px;
  box-sizing: border-box;
}

.view {
  flex: 1;
  min-height: 0;
  margin-top: 5px;
  display: flex;
}

.sheet {
  width: 1058px;
  flex: none;
  box-sizing: border-box;
  border-left: 1px solid #d4d4d4;
  border-right: 1px solid #d4d4d4;
  border-top: 1px solid #e2e2e2;
  background: #fff;
  overflow: hidden;
}

.sheet-title {
  height: 43px;
  margin: 0;
  padding: 9px 0 0 10px;
  box-sizing: border-box;
  font-size: 20px;
  font-weight: 300;
  line-height: 32px;
  color: #444;
}

.chart {
  display: block;
}

.grid {
  stroke: #eee;
  stroke-width: 1;
  shape-rendering: crispEdges;
}

.seg-label {
  font-size: 12.500px;
  text-anchor: middle;
  fill: #f2f2f2;
}

.seg-label.dark {
  fill: #222;
}

.tick {
  font-size: 12.500px;
  fill: #888;
}

.tick.end {
  text-anchor: end;
}

.tick.mid {
  text-anchor: middle;
}

.axis-title {
  font-size: 11.500px;
  font-weight: 600;
  text-anchor: middle;
  fill: #444;
}

.legend {
  width: 146px;
  margin-left: 10px;
  flex: none;
  padding-left: 1px;
}

.legend-title {
  height: 29px;
  line-height: 31px;
  padding-left: 3px;
  background: #f7f7f7;
  color: #555;
  font-size: 12px;
  margin-bottom: 1px;
}

.legend-item {
  height: 20px;
  display: flex;
  align-items: center;
  gap: 6px;
  color: #666;
  font-size: 12px;
  background: #fff;
}

.swatch {
  width: 12px;
  height: 12px;
  flex: none;
  box-sizing: border-box;
  border: 1px solid #ddd;
}

.tooltip {
  position: absolute;
  left: 150px;
  top: 616px;
  width: 123px;
  height: 67px;
  box-sizing: border-box;
  padding: 0 5px;
  border: 1px solid #777;
  background: #fff;
  box-shadow: 2px 2px 2px #888;
  color: #444;
  font-size: 13px;
  line-height: 16px;
}

.annotations {
  position: absolute;
  left: 0;
  top: 0;
  pointer-events: none;
}
</style>
